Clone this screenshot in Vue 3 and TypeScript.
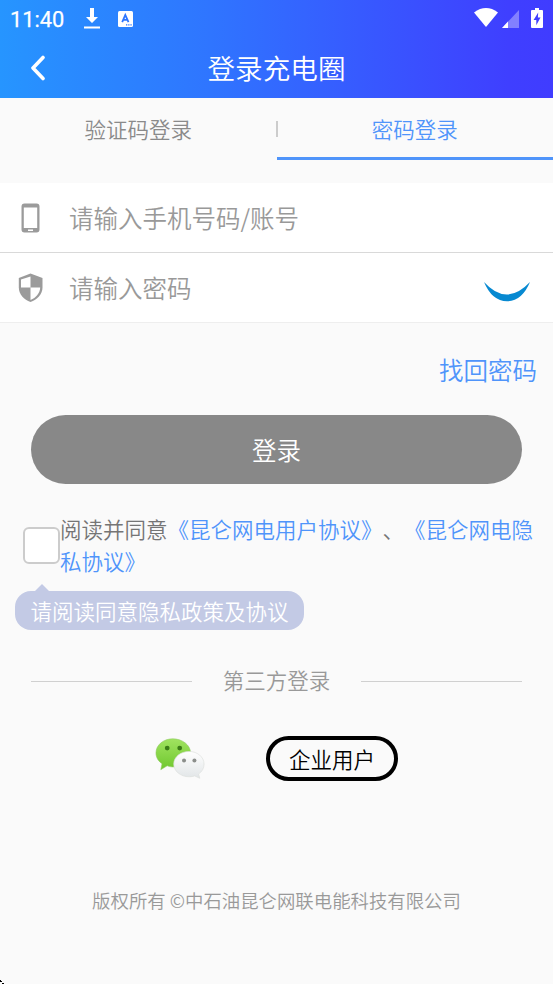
<script setup lang="ts">
import { ref } from 'vue'

const tabs = ['验证码登录', '密码登录']
const active = ref(1)
const account = ref('')
const password = ref('')
const agreed = ref(false)
</script>

<template>
  <main class="page">
    <header class="header">
      <div class="status">
        <span class="time">11:40</span>
        <svg class="download" width="16" height="22" viewBox="0 0 16 22" fill="#fff">
          <path d="M6 0h4v9h4l-6 6-6-6h4zM0 18.5h16v2H0z" />
        </svg>
        <svg class="keyboard" width="15" height="16" viewBox="0 0 15 16">
          <rect width="15" height="16" rx="1.5" fill="#fff" />
          <path d="M4.2 11.2 7.3 4l3.2 7.2M5.4 8.8h3.9" fill="none" stroke="#2d76ff" stroke-width="1.8" />
          <path d="M8 13.2h1.3v1.2H8zm2.2 0h1.3v1.2h-1.3zm2.2 0h1.3v1.2h-1.3z" fill="#2d76ff" />
        </svg>
        <span class="fill"></span>
        <svg class="wifi" width="24" height="19" viewBox="0 0 24 19" fill="#fff">
          <path d="M0 4.4Q12-4.2 24 4.4L12 19z" />
        </svg>
        <svg class="signal" width="17" height="18" viewBox="0 0 17 18">
          <path d="M17 0v18H0z" fill="#8280ff" />
          <path d="M6 11.6V18H0z" fill="#fff" />
        </svg>
        <svg class="battery" width="12" height="20" viewBox="0 0 12 20">
          <path d="M4 0h4v2h3q1 0 1 1v16q0 1-1 1H1q-1 0-1-1V3q0-1 1-1h3z" fill="#fff" />
          <path d="M7.2 4.5 2.6 12h2.7v5.2L9.5 9.6H6.9z" fill="#403fff" />
        </svg>
      </div>
      <nav class="navbar">
        <svg class="back" width="16" height="26" viewBox="0 0 16 26">
          <path d="M13 2.5 3 13l10 10.5" fill="none" stroke="#fff" stroke-width="3.6" stroke-linecap="round" stroke-linejoin="round" />
        </svg>
        <h1>登录充电圈</h1>
      </nav>
    </header>

    <div class="tabs">
      <button
        v-for="(tab, i) in tabs"
        :key="tab"
        class="tab"
        :class="{ active: i === active }"
        @click="active = i"
      >{{ tab }}</button>
    </div>

    <section class="fields">
      <label class="field">
        <svg width="31" height="32" viewBox="0 0 31 32">
          <path fill-rule="evenodd" d="M9.500 1.500h12q3 0 3 3v23q0 3-3 3h-12q-3 0-3-3v-23q0-3 3-3zM8.800 5.500V26h13.400V5.500zM13 27.500v1.500h5v-1.500z" fill="#9b9b9b" />
        </svg>
        <input v-model="account" type="text" placeholder="请输入手机号码/账号" />
      </label>
      <label class="field">
        <svg width="31" height="32" viewBox="0 0 31 32">
          <path d="M15.500 1.500 27.500 6v9.500C27.500 22 22 28 15.500 30 9 28 3.800 22 3.800 15.500V6z" fill="#9b9b9b" />
          <path d="M15.500 4.400V15.500H6V7.500zM15.500 15.500H25.200C25 21 21 26 15.500 28z" fill="#fff" />
        </svg>
        <input v-model="password" type="password" placeholder="请输入密码" />
        <svg class="eye" width="48" height="22" viewBox="0 0 48 22">
          <path d="M1 1Q23.500 26 47 1Q39 20.200 24 20.200T1 1z" fill="#0789d1" />
        </svg>
      </label>
    </section>

    <a class="forgot">找回密码</a>
    <button class="submit">登录</button>

    <div class="agreement">
      <input v-model="agreed" class="check" type="checkbox" />
      <p>阅读并同意<a>《昆仑网电用户协议》</a>、<a>《昆仑网电隐私协议》</a></p>
    </div>
    <div class="hint">请阅读同意隐私政策及协议</div>

    <div class="divider"><span>第三方登录</span></div>

    <div class="third">
      <svg class="wechat" width="50" height="43" viewBox="0 0 52 44">
        <defs>
          <linearGradient id="green" x2="0" y2="1"><stop stop-color="#a0e360" /><stop offset="1" stop-color="#6fc72e" /></linearGradient>
          <linearGradient id="white" x2="0" y2="1"><stop stop-color="#fff" /><stop offset="1" stop-color="#e1e5e7" /></linearGradient>
        </defs>
        <path d="M18.500 1.500C8.800 1.500 1 8 1 16.200c0 4.700 2.500 8.600 6.300 11.200L6 33.600l6.700-4c2.100.8 3.400 1.200 5.800 1.200C28 30.800 37 24.400 37 16.200S28.200 1.500 18.500 1.500z" fill="url(#green)" stroke="#91ca65" stroke-width=".6" />
        <path d="M35.500 14.700c-8.900 0-16 5.700-16 13.100S26.600 41 35.500 41c2.100 0 4-.3 5.800-.9l5.300 2.500-1.300-4.500c3.500-2.300 5.700-5.700 5.700-10.300 0-7.400-7-13.100-15.500-13.100z" fill="url(#white)" stroke="#dce0dd" stroke-width=".7" />
        <g fill="#3b7c16"><circle cx="12.700" cy="11.200" r="2.500" /><circle cx="25.700" cy="11.200" r="2.500" /></g>
        <g fill="#8b8e8b"><circle cx="30.200" cy="24" r="2.100" /><circle cx="41" cy="24" r="2.100" /></g>
      </svg>
      <button class="company">企业用户</button>
    </div>

    <footer class="footer">版权所有 ©中石油昆仑网联电能科技有限公司</footer>
    <svg class="corner" width="4" height="4" viewBox="0 0 4 4"><path d="M0 0h1v1h1v1H0zM2 3h2v1H2z" fill="#000" /></svg>
  </main>
</template>

<style>
body {
  margin: 0;
  background: #fafafa;
}
</style>

<style scoped>
.page {
  display: flex;
  flex-direction: column;
  box-sizing: border-box;
  width: 100%;
  height: 984px;
  overflow: hidden;
  background: #fafafa;
  color: #757575;
  font-family: "Noto Sans CJK SC", sans-serif;
  font-weight: 350;
  font-size: 21.5px;
}
button, input {
  font: inherit;
  margin: 0;
  padding: 0;
  border: 0;
  background: none;
}
svg { display: block; flex: none; }
.header {
  height: 98px;
  flex: none;
  background: linear-gradient(90deg, #2695ff, #2f75ff 38%, #3f3fff 92%, #403cff);
  color: #fff;
}
.status {
  display: flex;
  height: 38px;
  padding: 0 10px;
}
.time {
  width: 74px;
  font: 400 21.8px/39px Roboto, sans-serif;
  -webkit-text-stroke: .25px #fff;
}
.download { margin-top: 8px; }
.keyboard { margin: 11px 0 0 18px; }
.fill { flex: 1; }
.wifi { margin-top: 8px; }
.signal { margin: 10px 12px 0 4px; }
.battery { margin: 8px 0 0; }
.navbar {
  display: grid;
  grid-template-columns: 60px 1fr 60px;
  align-items: center;
  height: 60px;
}
.back { margin-left: 30px; }
h1 {
  margin: 0;
  text-align: center;
  font-size: 27.6px;
  font-weight: inherit;
  line-height: 58px;
  padding-bottom: 2px;
}
.tabs {
  display: grid;
  grid-template-columns: 1fr 1fr;
  height: 62px;
  margin-bottom: 23px;
  flex: none;
}
.tab {
  position: relative;
  height: 62px;
  padding-top: 2px;
  border-bottom: 3px solid transparent;
  color: #8a8a8a;
  line-height: 57px;
}
.tab:first-child::after {
  content: "";
  position: absolute;
  right: -1px;
  top: 23px;
  width: 2px;
  height: 16px;
  background: #ccc;
}
.tab.active {
  color: #4f94fa;
  border-color: #4f94fa;
}
.fields { flex: none; background: #fff; }
.field {
  display: flex;
  align-items: center;
  height: 69px;
  padding: 0 22px 0 15px;
  border-bottom: 1px solid #d9d9d9;
}
.field:last-child { border-color: #eee; }
.field input {
  flex: 1;
  min-width: 0;
  height: 40px;
  margin-left: 23px;
  font-size: 24.5px;
  outline: 0;
}
.field input::placeholder { color: #999; opacity: 1; }
.eye { margin-top: 9px; }
.forgot {
  align-self: flex-end;
  margin: 29px 16px 0 0;
  font-size: 24.5px;
  line-height: 36px;
  color: #4f94fa;
}
.submit {
  flex: none;
  height: 69px;
  margin: 27px 31px 0;
  border-radius: 35px;
  background: #888;
  color: #fff;
  font-size: 24.5px;
}
.agreement {
  display: flex;
  align-items: center;
  margin: 29px 15px 0 23px;
}
.check {
  appearance: none;
  flex: none;
  box-sizing: border-box;
  width: 37px;
  height: 37px;
  margin-top: 2px;
  border: 2px solid #ccc;
  border-radius: 6px;
  background: #fff;
}
.agreement p {
  margin: 0;
  line-height: 31.500px;
  word-break: break-all;
  text-spacing-trim: space-all;
}
.agreement a { color: #4f94fa; }
.hint {
  position: relative;
  align-self: flex-start;
  box-sizing: border-box;
  height: 39px;
  margin: 15px 0 0 15px;
  padding: 0 15.500px;
  border-radius: 16px;
  background: #c3cae5;
  color: #fff;
  line-height: 39px;
}
.hint::before {
  content: "";
  position: absolute;
  left: 19px;
  top: -7px;
  border: solid transparent;
  border-width: 0 8px 8px;
  border-bottom-color: #c3cae5;
}
.divider {
  display: flex;
  align-items: center;
  gap: 31px;
  height: 32px;
  margin: 35px 31px 0;
  color: #999;
}
.divider span {
  padding-bottom: 2px;
  line-height: 30px;
}
.divider::before, .divider::after {
  content: "";
  flex: 1;
  height: 1px;
  background: #d0d0d0;
}
.third {
  display: flex;
  margin: 39px 0 0 155px;
}
.wechat { margin-top: 1px; }
.company {
  box-sizing: border-box;
  width: 132px;
  height: 45px;
  margin-left: 61px;
  padding-bottom: 1px;
  border: 4px solid #000;
  border-radius: 23px;
  color: #000;
}
.footer {
  margin-top: 105px;
  text-align: center;
  color: #999;
  font-size: 18.4px;
  line-height: 28px;
}
.corner { margin-top: auto; }
</style>
